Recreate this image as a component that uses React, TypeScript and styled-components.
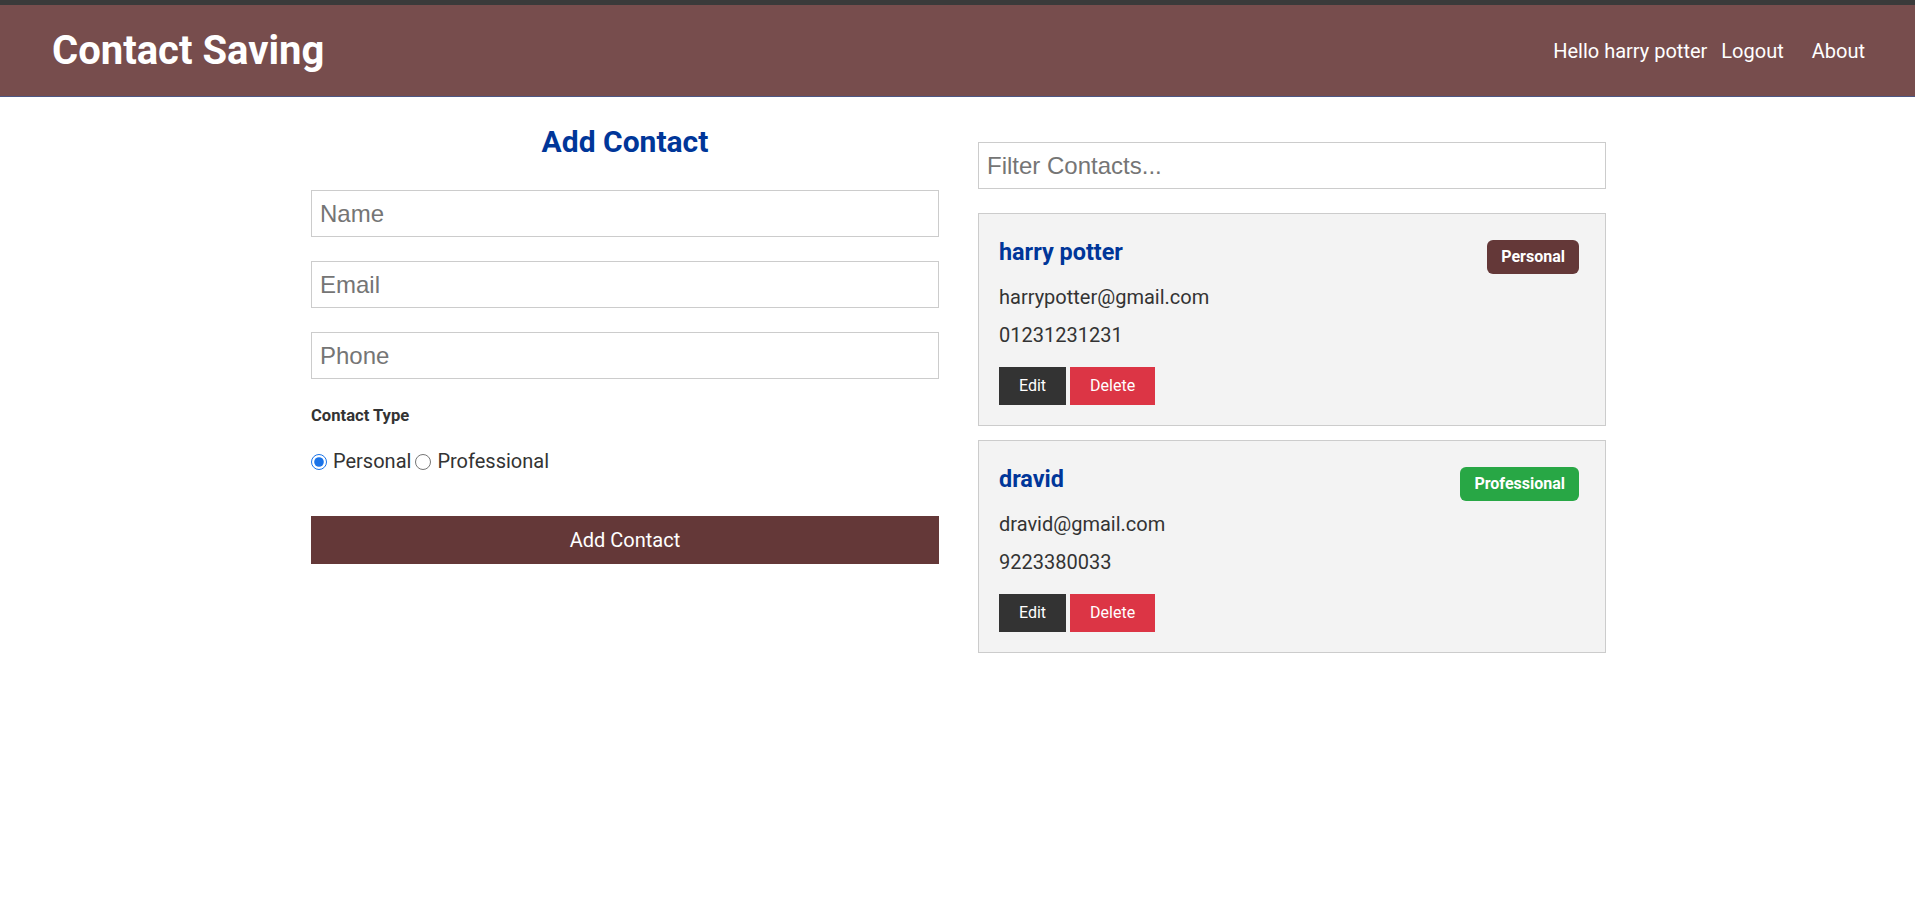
import React, { useState } from 'react';
import styled, { createGlobalStyle } from 'styled-components';

const GlobalStyle = createGlobalStyle`
	* {
		box-sizing: border-box;
		margin: 0;
		padding: 0;
	}
	html {
		font-size: 20px;
	}
	body {
		font-family: Roboto, 'Liberation Sans', sans-serif;
		font-size: 1rem;
		line-height: 1.6;
		background-color: #fff;
		color: #333;
	}
`;

const TopStrip = styled.div`
	height: 5px;
	background-color: #3a3a3a;
`;

const Navbar = styled.nav`
	display: flex;
	justify-content: space-between;
	align-items: center;
	padding: 0.7rem 36px 0.7rem 52px;
	background-color: #774d4d;
	border-bottom: 1px solid #4d5784;
	margin-bottom: 21px;
	color: #fff;
	& > h1 {
		font-size: 2rem;
		line-height: 63px;
		font-weight: bold;
	}
`;

const NavList = styled.ul`
	display: flex;
	list-style: none;
	font-size: 1rem;
`;

const NavLink = styled.a`
	color: #fff;
	text-decoration: none;
	padding: 0.45rem;
	margin: 0 0.25rem;
`;

const Container = styled.div`
	width: 1375px;
	margin: 0 auto;
	padding: 0 39px 0 41px;
`;

const Grid = styled.div`
	display: grid;
	grid-template-columns: repeat(2, 1fr);
	gap: 39px;
`;

const Heading = styled.h2`
	font-size: 1.5rem;
	font-weight: bold;
	color: #003699;
	text-align: center;
`;

const TextInput = styled.input`
	display: block;
	width: 100%;
	margin: 1.2rem 0;
	padding: 0.4rem;
	font-family: 'Liberation Sans', Arial, sans-serif;
	font-size: 1.2rem;
	line-height: 29px;
	border: 1px solid #ccc;
	color: #333;
	&::placeholder {
		color: #757575;
	}
`;

const TypeLabel = styled.h5`
	font-size: 0.83rem;
	font-weight: bold;
`;

const RadioLine = styled.div`
	font-size: 1rem;
	& > input {
		margin: 1.2rem 0;
		width: 16px;
		height: 16px;
		vertical-align: -2px;
		accent-color: #1a73e8;
	}
	& > span {
		margin: 0 4px 0 6px;
	}
`;

const SubmitButton = styled.button`
	display: block;
	width: 100%;
	margin: 22px 0 1.2rem;
	padding: 0.4rem 1.3rem;
	font-family: Roboto, sans-serif;
	font-size: 1rem;
	line-height: 1.6;
	border: none;
	background-color: #643838;
	color: #fff;
	cursor: pointer;
`;

const Card = styled.div`
	padding: 1rem;
	border: 1px solid #ccc;
	background-color: #f3f3f3;
	margin: 0.7rem 0;
`;

const CardTitle = styled.h3`
	font-size: 1.17rem;
	font-weight: bold;
	color: #003699;
	text-align: left;
`;

type BadgeProps = {
	$type: string;
};
const Badge = styled.span<BadgeProps>`
	float: right;
	font-size: 0.8rem;
	padding: 0.2rem 0.7rem;
	margin: 0.3rem;
	border-radius: 6px;
	color: #fff;
	background-color: ${(props) => (props.$type === 'professional' ? '#28a745' : '#643838')};
`;

const InfoList = styled.ul`
	list-style: none;
	margin: 0.5rem 0;
	& > li {
		padding-bottom: 0.3rem;
	}
`;

type SmallButtonProps = {
	$variant: 'dark' | 'danger';
};
const SmallButton = styled.button<SmallButtonProps>`
	display: inline-block;
	font-family: Roboto, sans-serif;
	font-size: 0.8rem;
	line-height: 1.6;
	padding: 0.3rem 1rem;
	margin-right: 0.2rem;
	border: none;
	color: #fff;
	background-color: ${(props) => (props.$variant === 'danger' ? '#dc3545' : '#333')};
	cursor: pointer;
`;

type Contact = {
	id: number;
	name: string;
	email: string;
	phone: string;
	type: string;
};

const contacts: Contact[] = [
	{ id: 1, name: 'harry potter', email: 'harrypotter@gmail.com', phone: '01231231231', type: 'personal' },
	{ id: 2, name: 'dravid', email: 'dravid@gmail.com', phone: '9223380033', type: 'professional' },
];

const ContactItem = ({ contact }: { contact: Contact }) => {
	const { name, email, phone, type } = contact;
	return (
		<Card>
			<CardTitle>
				{name}{' '}
				<Badge $type={type}>{type.charAt(0).toUpperCase() + type.slice(1)}</Badge>
			</CardTitle>
			<InfoList>
				<li>{email}</li>
				<li>{phone}</li>
			</InfoList>
			<p>
				<SmallButton $variant="dark">Edit</SmallButton>
				<SmallButton $variant="danger">Delete</SmallButton>
			</p>
		</Card>
	);
};

const App = () => {
	const [type, setType] = useState('personal');

	return (
		<>
			<GlobalStyle />
			<TopStrip />
			<Navbar>
				<h1>Contact Saving</h1>
				<NavList>
					<li>Hello harry potter</li>
					<li>
						<NavLink href="#">Logout</NavLink>
					</li>
					<li>
						<NavLink href="#">About</NavLink>
					</li>
				</NavList>
			</Navbar>
			<Container>
				<Grid>
					<form onSubmit={(e) => e.preventDefault()}>
						<Heading>Add Contact</Heading>
						<TextInput type="text" placeholder="Name" />
						<TextInput type="email" placeholder="Email" />
						<TextInput type="text" placeholder="Phone" />
						<TypeLabel>Contact Type</TypeLabel>
						<RadioLine>
							<input
								type="radio"
								name="type"
								checked={type === 'personal'}
								onChange={() => setType('personal')}
							/>
							<span>Personal</span>
							<input
								type="radio"
								name="type"
								checked={type === 'professional'}
								onChange={() => setType('professional')}
							/>
							<span>Professional</span>
						</RadioLine>
						<SubmitButton type="submit">Add Contact</SubmitButton>
					</form>
					<div>
						<TextInput type="text" placeholder="Filter Contacts..." />
						{contacts.map((c) => (
							<ContactItem key={c.id} contact={c} />
						))}
					</div>
				</Grid>
			</Container>
		</>
	);
};

export default App;
